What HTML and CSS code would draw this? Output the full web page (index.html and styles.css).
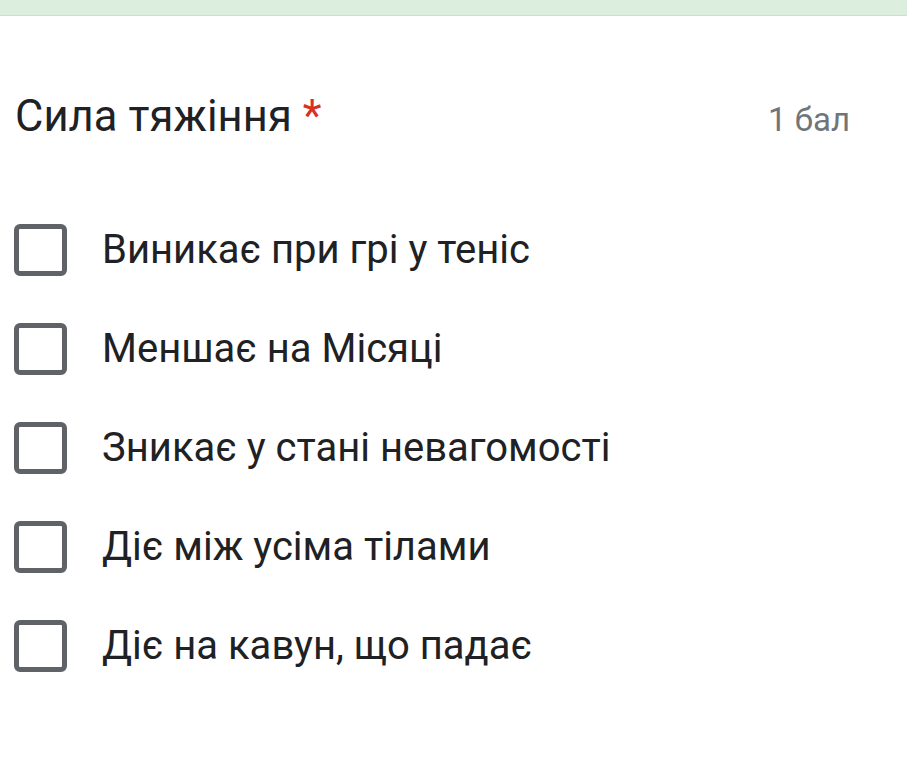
FILE: index.html
```html
<!DOCTYPE html>
<html lang="uk">
<head>
<meta charset="utf-8">
<link rel="stylesheet" href="styles.css">
</head>
<body>
<div class="top-band"></div>
<div class="card">
  <div class="header">
    <div class="title">Сила тяжіння <span class="req">*</span></div>
    <div class="points">1 бал</div>
  </div>
  <div class="options">
    <div class="option"><span class="box"></span><span class="label">Виникає при грі у теніс</span></div>
    <div class="option"><span class="box"></span><span class="label">Меншає на Місяці</span></div>
    <div class="option"><span class="box"></span><span class="label">Зникає у стані невагомості</span></div>
    <div class="option"><span class="box"></span><span class="label">Діє між усіма тілами</span></div>
    <div class="option"><span class="box"></span><span class="label">Діє на кавун, що падає</span></div>
  </div>
</div>
</body>
</html>
```
FILE: styles.css
```css
html, body {
  margin: 0;
  padding: 0;
  background: #ffffff;
  font-family: Roboto, "Noto Sans", sans-serif;
  overflow: hidden;
}
.top-band {
  height: 15px;
  background: #dcefdf;
  border-bottom: 1px solid #d6d9d6;
}
.card {
  background: #ffffff;
  border-top-right-radius: 10px;
  height: 744px;
  box-sizing: border-box;
}
.header {
  display: flex;
  justify-content: space-between;
  align-items: baseline;
  padding: 75px 57px 0 15px;
}
.title {
  font-size: 43.5px;
  color: #202124;
  letter-spacing: 0.1px;
}
.req {
  color: #d93025;
}
.points {
  font-size: 33px;
  color: #70757a;
}
.options {
  display: flex;
  flex-direction: column;
  padding: 58px 0 0 14px;
}
.option {
  display: flex;
  align-items: center;
  height: 99px;
}
.box {
  width: 53px;
  height: 52px;
  box-sizing: border-box;
  border: 5px solid #5f6368;
  border-radius: 6px;
  flex-shrink: 0;
}
.label {
  margin-left: 35px;
  font-size: 40px;
  color: #202124;
}
```
